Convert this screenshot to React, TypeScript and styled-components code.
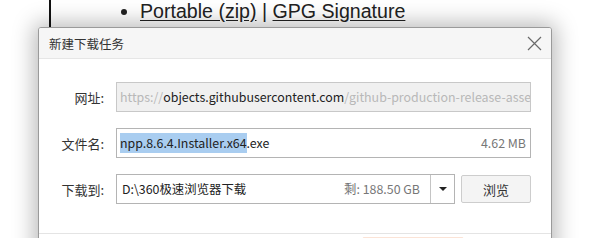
import { FC } from "react";
import styled, { createGlobalStyle } from "styled-components";

const CJK = `"Noto Sans CJK SC", "Noto Sans", sans-serif`;

const GlobalStyle = createGlobalStyle`
  html, body {
    margin: 0;
    padding: 0;
    background: #fff;
    overflow: hidden;
  }
`;

const Page = styled.div`
  position: relative;
  width: 589px;
  height: 238px;
  padding-left: 49px;
  box-sizing: border-box;
  overflow: hidden;
`;

const Article = styled.div`
  height: 100%;
  border-left: 2px solid #111;
`;

const LinkList = styled.ul`
  margin: 0;
  padding-left: 89px;
  font-family: "Liberation Sans", Arial, sans-serif;
  font-size: 19.6px;
  line-height: 22px;
  color: #222;
`;

const Link = styled.a`
  color: #222;
  text-decoration: underline;
  text-underline-offset: 2px;
`;

const Dialog = styled.div`
  position: absolute;
  left: 38px;
  top: 27px;
  width: 514px;
  height: 280px;
  border: 1px solid #9a9a9a;
  border-radius: 3px 3px 0 0;
  background: #fff;
  box-shadow: 0 0 22px 4px rgba(0, 0, 0, 0.28);
  box-sizing: border-box;
  display: flex;
  flex-direction: column;
  font-family: ${CJK};
  overflow: hidden;
`;

const TitleBar = styled.div`
  height: 30px;
  flex-shrink: 0;
  display: flex;
  align-items: center;
  justify-content: space-between;
  padding: 0 8px 0 10px;
  background: #f6f6f6;
  border-bottom: 1px solid #e6e6e6;
  font-size: 12.5px;
  color: #333;
`;

const CloseButton = styled.button`
  width: 18px;
  height: 18px;
  padding: 0;
  border: none;
  background: none;
  display: flex;
  align-items: center;
  justify-content: center;
`;

const Body = styled.div`
  display: flex;
  flex-direction: column;
  gap: 16px;
  padding: 23px 20px 29px 0;
  border-bottom: 1px solid #e4e4e4;
`;

const Row = styled.div`
  display: flex;
  align-items: center;
  height: 30px;
`;

const Label = styled.label`
  width: 65px;
  flex-shrink: 0;
  text-align: right;
  font-size: 13px;
  color: #333;
  margin-right: 12px;
`;

const Field = styled.div<{ $disabled?: boolean }>`
  flex: 1;
  min-width: 0;
  height: 100%;
  box-sizing: border-box;
  border: 1px solid ${(p) => (p.$disabled ? "#c8c8c8" : "#b4b4b4")};
  background: ${(p) => (p.$disabled ? "#f0f0f0" : "#fff")};
  display: flex;
  align-items: center;
  padding: 0 4px 0 3px;
  font-size: 12.4px;
  color: #222;
  white-space: nowrap;
  overflow: hidden;
`;

const Muted = styled.span`
  color: #b8b8b8;
`;

const Selected = styled.span`
  background: #a9cdf0;
  padding: 1px 0;
`;

const Side = styled.span`
  margin-left: auto;
  color: #777;
  padding-left: 8px;
`;

const Combo = styled(Field)`
  padding-left: 5px;
  padding-right: 0;
`;

const DropButton = styled.div`
  width: 23px;
  height: 100%;
  margin-left: 10px;
  border-left: 1px solid #c4c4c4;
  display: flex;
  align-items: center;
  justify-content: center;
  flex-shrink: 0;
`;

const Arrow = styled.div`
  width: 0;
  height: 0;
  border-left: 4px solid transparent;
  border-right: 4px solid transparent;
  border-top: 4px solid #222;
`;

const BrowseButton = styled.button`
  width: 70px;
  height: 28px;
  margin-left: 6px;
  flex-shrink: 0;
  border: 1px solid #cdcdcd;
  border-radius: 2px;
  background: #f4f4f4;
  font-family: ${CJK};
  font-size: 13px;
  color: #333;
`;

const Footer = styled.div`
  display: flex;
  padding: 3px 0 0 323px;
`;

const StartButton = styled.div`
  width: 100px;
  height: 30px;
  border-radius: 2px;
  background: #fdf0ea;
  border: 1px solid #fbe3d6;
`;

const App: FC = () => {
  return (
    <>
      <GlobalStyle />
      <Page>
        <Article>
          <LinkList>
            <li>
              <Link>Portable (zip)</Link> | <Link>GPG Signature</Link>
            </li>
          </LinkList>
        </Article>
        <Dialog>
          <TitleBar>
            <span>新建下载任务</span>
            <CloseButton>
              <svg width="15" height="15" viewBox="0 0 15 15">
                <path d="M1 1 L14 14 M14 1 L1 14" stroke="#6a6a6a" strokeWidth="1.2" fill="none" />
              </svg>
            </CloseButton>
          </TitleBar>
          <Body>
            <Row>
              <Label>网址:</Label>
              <Field $disabled>
                <Muted>https://</Muted>
                objects.githubusercontent.com
                <Muted>/github-production-release-asset-2e65be</Muted>
              </Field>
            </Row>
            <Row>
              <Label>文件名:</Label>
              <Field>
                <Selected>npp.8.6.4.Installer.x64</Selected>.exe
                <Side>4.62 MB</Side>
              </Field>
            </Row>
            <Row>
              <Label>下载到:</Label>
              <Combo>
                D:\360极速浏览器下载
                <Side>剩: 188.50 GB</Side>
                <DropButton>
                  <Arrow />
                </DropButton>
              </Combo>
              <BrowseButton>浏览</BrowseButton>
            </Row>
          </Body>
          <Footer>
            <StartButton />
          </Footer>
        </Dialog>
      </Page>
    </>
  );
};

export default App;
